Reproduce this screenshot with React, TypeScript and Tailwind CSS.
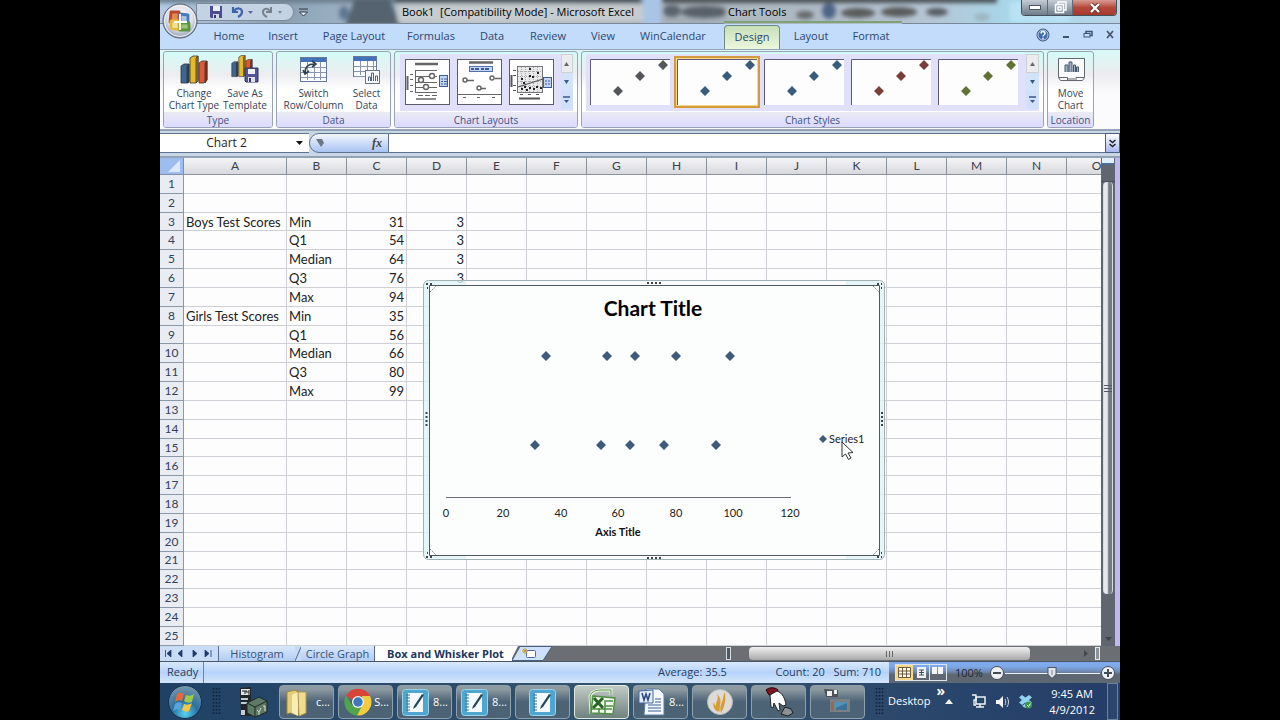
import React from "react";

type Row = { a?: string; b?: string; c?: number; d?: number };

const rows: Row[] = Array.from({ length: 25 }, () => ({}));
["Min", "Q1", "Median", "Q3", "Max", "Min", "Q1", "Median", "Q3", "Max"].forEach((b, i) => {
  rows[i + 2] = { b, c: [31, 54, 64, 76, 94, 35, 56, 66, 80, 99][i], d: i < 4 ? 3 : undefined };
});
rows[2].a = "Boys Test Scores";
rows[7].a = "Girls Test Scores";

const columns = "ABCDEFGHIJKLMNO".split("");

const diamond = (x: number, y: number, r: number) =>
  `M${x} ${y - r}L${x + r} ${y}L${x} ${y + r}L${x - r} ${y}Z`;

/* ---------- title bar ---------- */

function OfficeButton() {
  return (
    <button aria-label="Office Button" className="absolute top-0 left-0.5 z-10">
      <svg width="38" height="40" viewBox="0 0 38 40">
        <defs>
          <radialGradient id="orb" cx="50%" cy="40%" r="60%">
            <stop offset="0" stopColor="#ffffff" />
            <stop offset="0.6" stopColor="#dfe3ec" />
            <stop offset="1" stopColor="#8b94a6" />
          </radialGradient>
        </defs>
        <circle cx="18" cy="21" r="17" fill="url(#orb)" stroke="#56606f" />
        <circle cx="18" cy="21" r="15.5" fill="none" stroke="#f4f6fa" />
        <g strokeWidth="2.8" strokeLinejoin="round">
          <path d="M9 12h8v10H8z" stroke="#b9482a" fill="#e88a4c" />
          <path d="M18 14l8 1v8h-8z" stroke="#4678bc" fill="#a9c4e6" />
          <path d="M9 21h8v9l-8-2z" stroke="#e5b93a" fill="#f6df92" />
          <path d="M18 23h9v7h-9z" stroke="#5a9440" fill="#9cc87c" />
        </g>
        <path d="M18 14v16M12 22h13" stroke="#fff" strokeWidth="1.8" />
      </svg>
    </button>
  );
}

function TitleBar() {
  return (
    <header className="relative flex h-6 shrink-0 items-center bg-[#a9b9c6] text-[11px] text-black">
      <svg className="absolute inset-0 h-full w-full" viewBox="0 0 960 24" preserveAspectRatio="none" aria-hidden="true">
        <defs>
          <filter id="glass"><feGaussianBlur stdDeviation="2.2" /></filter>
          <linearGradient id="barBase" x1="0" x2="1" y1="0" y2="0">
            <stop offset="0" stopColor="#b4cbe3" />
            <stop offset="0.13" stopColor="#8c9fb0" />
            <stop offset="0.16" stopColor="#93aabd" />
            <stop offset="0.3" stopColor="#b7c1c9" />
            <stop offset="0.55" stopColor="#a4adb4" />
            <stop offset="0.8" stopColor="#b5c5d4" />
            <stop offset="0.9" stopColor="#a5d9ec" />
            <stop offset="1" stopColor="#b9d3e6" />
          </linearGradient>
        </defs>
        <rect width="960" height="24" fill="url(#barBase)" />
        <g filter="url(#glass)">
          <rect x="-5" y="-4" width="500" height="7" fill="#6c7f90" />
          <path d="M195 -2h35l10 28h-55z" fill="#55646f" />
          <ellipse cx="112" cy="12" rx="26" ry="8" fill="#8ba0b2" />
          <ellipse cx="184" cy="13" rx="5" ry="7" fill="#5d7690" />
          <rect x="238" y="5" width="245" height="17" fill="#c6cccf" />
          <rect x="235" y="-4" width="245" height="7" fill="#4a5359" />
          <rect x="483" y="-4" width="18" height="32" fill="#a8c5e6" />
          <rect x="502" y="-4" width="335" height="7" fill="#4b5357" />
          <ellipse cx="512" cy="11" rx="9" ry="6" fill="#5a646e" />
          <ellipse cx="545" cy="12" rx="24" ry="6" fill="#59616a" />
          <rect x="566" y="7" width="66" height="13" fill="#aeb9c1" />
          <ellipse cx="645" cy="15" rx="9" ry="4" fill="#66696c" />
          <ellipse cx="669" cy="11" rx="7" ry="8" fill="#4f6486" />
          <ellipse cx="698" cy="13" rx="17" ry="5" fill="#5a5b5c" />
          <ellipse cx="739" cy="12" rx="18" ry="5" fill="#5a5b5c" />
          <ellipse cx="777" cy="12" rx="11" ry="4" fill="#545a60" />
          <ellipse cx="822" cy="17" rx="8" ry="4" fill="#9db5bf" />
          <rect x="850" y="2" width="60" height="20" fill="#b9e3f4" />
        </g>
        <path d="M564 22h178" stroke="#7fa274" strokeWidth="2" />
        <path d="M0 23.5h564M742 23.5h218" stroke="#77889a" strokeWidth="1" />
      </svg>
      <OfficeButton />
      <div className="relative ml-9 flex h-[18px] w-[98px] items-center gap-2 rounded-r-full border border-[#7d8b9b] bg-[#c4d3e4] pl-3">
        <button aria-label="Save">
          <svg width="14" height="14" viewBox="0 0 14 14">
            <path d="M1 1h12v12H2l-1-1z" fill="#4a4c94" />
            <path d="M4 1h7v5H4z" fill="#e9edf8" />
            <path d="M4 9h6v4H4z" fill="#d5d8ec" />
            <path d="M5 10h2v3H5z" fill="#34366f" />
          </svg>
        </button>
        <button aria-label="Undo">
          <svg width="22" height="14" viewBox="0 0 22 14">
            <path d="M2 2v5h5M3 6c3-4 8-3 8 1 0 2-2 4-4 5" fill="none" stroke="#3f62ad" strokeWidth="2.200" />
            <path d="M17 6h5l-2.500 3z" fill="#5b6c83" />
          </svg>
        </button>
        <button aria-label="Redo">
          <svg width="22" height="14" viewBox="0 0 22 14">
            <path d="M10 2v5H5M9 6C6 2 2 4 2 7c0 2 2 4 4 5" fill="none" stroke="#76818e" strokeWidth="2" />
            <path d="M17 6h4l-2 3z" fill="#7a8798" />
          </svg>
        </button>
      </div>
      <button aria-label="Customize toolbar" className="relative ml-1">
        <svg width="11" height="9" viewBox="0 0 11 9">
          <path d="M1 1h9" stroke="#2c3845" /><path d="M1.500 4h8L5.500 8z" fill="#e8eef4" stroke="#2c3845" />
        </svg>
      </button>
      <h1 className="relative ml-[92px] w-[234px] text-center font-medium whitespace-nowrap">
        Book1&nbsp; [Compatibility Mode] - Microsoft Excel
      </h1>
      <span className="relative ml-[93px] font-medium whitespace-nowrap">Chart Tools</span>
      <div className="relative mr-[3px] ml-auto flex h-4 self-start overflow-hidden rounded-b border border-t-0 border-[#454f5c]">
        <button aria-label="Minimize" className="flex w-[26px] items-center justify-center border-r border-[#5f6b78] bg-linear-to-b from-[#c5ccd5] to-[#6f7c8b]">
          <svg width="12" height="5"><rect x=".5" y=".5" width="11" height="4" fill="#fff" stroke="#4c5660" /></svg>
        </button>
        <button aria-label="Restore" className="flex w-[25px] items-center justify-center border-r border-[#5f6b78] bg-linear-to-b from-[#c5ccd5] to-[#6f7c8b]">
          <svg width="13" height="13" fill="none" stroke="#fff" strokeWidth="1.500">
            <path d="M4 3V1h8v8h-2" /><rect x="1.500" y="3.500" width="8" height="8" /><rect x="4" y="6" width="3" height="3" stroke="#fff" />
          </svg>
        </button>
        <button aria-label="Close" className="flex w-[43px] items-center justify-center bg-linear-to-b from-[#d79c94] via-[#b5483c] to-[#a53a2c]">
          <svg width="12" height="10"><path d="M2 1l8 8M10 1L2 9" stroke="#59322e" strokeWidth="4" /><path d="M2 1l8 8M10 1L2 9" stroke="#fff" strokeWidth="2.400" /></svg>
        </button>
      </div>
    </header>
  );
}

/* ---------- ribbon ---------- */

const tabs: [string, string][] = [
  ["Home", "w-12"],
  ["Insert", "w-[60px]"],
  ["Page Layout", "w-[82px]"],
  ["Formulas", "w-[72px]"],
  ["Data", "w-[50px]"],
  ["Review", "w-[62px]"],
  ["View", "w-12"],
  ["WinCalendar", "w-[92px]"],
  ["Design", "w-[56px] mx-[5px]"],
  ["Layout", "w-[52px]"],
  ["Format", "w-[68px]"],
];

function TabRow() {
  return (
    <nav className="flex h-[25px] shrink-0 items-end bg-[#c3dcfb] pl-[45px] text-[11px] leading-[22px] text-[#2d4672]" aria-label="Ribbon tabs">
      {tabs.map(([name, w]) => (
        <button
          key={name}
          className={
            w +
            " h-6 pb-0.5 text-center whitespace-nowrap " +
            (name === "Design"
              ? "rounded-t border border-b-0 border-[#6f8b86] bg-linear-to-b from-[#c7dfb8] to-[#ecf8dc]"
              : "")
          }
        >
          {name}
        </button>
      ))}
      <div className="mr-[5px] ml-auto flex h-full items-center gap-3 pb-1">
        <button aria-label="Help">
          <svg width="14" height="14" viewBox="0 0 14 14">
            <circle cx="7" cy="7" r="6" fill="#3d6cb0" stroke="#3a4d6c" />
            <circle cx="7" cy="7" r="5" fill="none" stroke="#dbe8fa" strokeWidth=".8" />
            <path d="M5 5.500c0-3 4-2.500 4 0C9 7 7 7 7 8.500M7 9.800v1.400" fill="none" stroke="#fff" strokeWidth="1.400" />
          </svg>
        </button>
        <button aria-label="Minimize workbook"><svg width="9" height="9"><path d="M1 7h6" stroke="#3d5374" strokeWidth="2" /></svg></button>
        <button aria-label="Restore workbook">
          <svg width="10" height="9" fill="none" stroke="#3d5374"><path d="M3 3V1.500h6v4H7" strokeWidth="1.500" /><rect x="1" y="3.500" width="6" height="3.500" /></svg>
        </button>
        <button aria-label="Close workbook"><svg width="10" height="9"><path d="M2 1l6 7M8 1L2 8" stroke="#4a5568" strokeWidth="1.800" /></svg></button>
      </div>
    </nav>
  );
}

function Group({ title, className, children }: { title: string; className: string; children: React.ReactNode }) {
  return (
    <section
      className={
        "flex shrink-0 flex-col overflow-hidden rounded-[3px] border border-[#9aa2b8] bg-linear-to-b from-[#d2fbf6] from-0% via-[#ededf0] via-30% to-white to-50% " +
        className
      }
    >
      <div className="flex min-h-0 flex-1 justify-center">{children}</div>
      <h2 className="h-[15px] bg-linear-to-b from-[#ebebf3] to-[#dcdaff] text-center text-[10px] leading-4 whitespace-nowrap text-[#3f4f86]">
        {title}
      </h2>
    </section>
  );
}

function BigButton({ lines, className, children }: { lines: [string, string]; className: string; children: React.ReactNode }) {
  return (
    <button className={"flex flex-col items-center text-[10px] leading-3 whitespace-nowrap text-[#34425c] " + className}>
      <span className="flex h-[35px] items-center">{children}</span>
      <span>{lines[0]}</span>
      <span>{lines[1]}</span>
    </button>
  );
}

function Bars({ x = 0, s = 1 }: { x?: number; s?: number }) {
  return (
    <g transform={`translate(${x} 0) scale(${s})`} stroke="#3b3430" strokeWidth=".8" strokeLinejoin="round">
      <path d="M1 12l3-2h5v18l-2 1H1z" fill="#3b6793" />
      <path d="M7 12l2-2v18l-2 1z" fill="#234563" />
      <path d="M10 4l3-2h5v25l-2 2h-6z" fill="#e6bb2b" />
      <path d="M16 4l2-2v25l-2 2z" fill="#a9811a" />
      <path d="M19 9l3-2h5v19l-3 3h-5z" fill="#dd5a32" />
      <path d="M25 9l2-2v19l-2 3z" fill="#98301d" />
    </g>
  );
}

function SheetGrid({ w, h }: { w: number; h: number }) {
  return (
    <g>
      <rect x=".5" y="1.500" width={w} height={h} fill="#fcfdff" stroke="#68779c" />
      <rect x="1" y="2" width={w - 1} height="4" fill="#4272b8" />
      <path
        d={`M1 11.500H${w}M1 16.500H${w}M1 21.500H${w}M7.500 6V${h}M14.500 6V${h}M20.500 6V${h}`}
        stroke="#8a93b0"
      />
    </g>
  );
}

function LayoutThumb({ kind }: { kind: number }) {
  return (
    <svg width="45" height="46" viewBox="0 0 45 46">
      <rect x=".5" y=".5" width="44" height="45" fill="#fff" stroke="#5c5c66" />
      {kind === 0 && (
        <g fill="none" stroke="#666" strokeWidth="1">
          <path d="M10 5h23" strokeWidth="2.500" />
          <path d="M10.500 11v23M10 11.500h22M10 17.500h22M10 23.500h22M10 28.500h22M10 33.500h22" />
          <path d="M2.500 17v14" strokeWidth="2" />
          <path d="M5 15.500h3M5 20.500h3M5 26.500h3M5 32.500h3M13 36.500h5M20 36.500h5M27 36.500h5" />
          <path d="M11 40h20" strokeWidth="1.500" />
          <g fill="#fff" strokeWidth="1.500"><circle cx="16" cy="21" r="2.500" /><circle cx="27" cy="17" r="2.500" /><circle cx="21" cy="28" r="2.500" /></g>
          <rect x="34.500" y="16.500" width="8" height="11" fill="#c4d6f3" stroke="#3c5d9c" />
          <path d="M36 20h2M39 20h3M36 22.500h2M39 22.500h3M36 25h2M39 25h3" stroke="#3c5d9c" />
        </g>
      )}
      {kind === 1 && (
        <g fill="none" stroke="#666">
          <path d="M12 3.500h24" strokeWidth="2.500" />
          <rect x="12.500" y="7.500" width="23" height="5" fill="#c4d6f3" stroke="#5371a8" />
          <path d="M14 10h3M18 10h4M24 10h3M28 10h4" stroke="#3c5d9c" strokeWidth="2" />
          <path d="M10 21.500h7M24 29.500h5M38 19.500h6" strokeWidth="1.500" />
          <g fill="#fff" strokeWidth="1.500"><circle cx="8" cy="21" r="2" /><circle cx="22" cy="29" r="2" /><circle cx="35" cy="19" r="2" /></g>
          <path d="M1 35.500h43M6 38.500h3M20 38.500h3M35 38.500h3" />
        </g>
      )}
      {kind === 2 && (
        <g fill="none" stroke="#555">
          <rect x="8.500" y="7.500" width="25" height="26" fill="#e9e9ec" stroke="#777" />
          <path d="M12.500 8v25M16.500 8v25M20.500 8v25M24.500 8v25M28.500 8v25M9 12.500h24M9 17.500h24M9 22.500h24M9 27.500h24" stroke="#aaa" strokeDasharray="1 1" />
          <path d="M9 28l25-8" strokeWidth="1.300" />
          <path d="M2.500 16v12" strokeWidth="2" />
          <path d="M4 11.500h3M4 16.500h3M4 26.500h3M4 31.500h3M11 35.500h3M19 35.500h3M27 35.500h3" />
          <path d="M10 39.500h21" strokeWidth="2" />
          <rect x="34.500" y="18.500" width="8" height="10" fill="#c4d6f3" stroke="#3c5d9c" />
          <path d="M36 22h2M39 22h2M36 25h2M39 25h2" stroke="#3c5d9c" />
          <path d="M20 10h2M20 17h2M23 18h2M28 14h2M12 20h2M12 30h2M15 28h2M17 31h2M20 29h2M24 30h2M27 28h2M31 29h2M14 24h2" stroke="#222" strokeWidth="1.800" />
        </g>
      )}
    </svg>
  );
}

function GallerySpinner() {
  return (
    <div className="ml-auto flex w-[13px] flex-col">
      <button aria-label="Scroll up" className="flex h-[19px] items-center justify-center border border-[#cfcfd6] bg-[#ececee]">
        <svg width="5" height="4"><path d="M0 4l2.500-4L5 4z" fill="#666" /></svg>
      </button>
      <button aria-label="Scroll down" className="flex h-[18px] items-center justify-center bg-[#d3e3f9]">
        <svg width="5" height="4"><path d="M0 0h5L2.500 4z" fill="#385a88" /></svg>
      </button>
      <button aria-label="More" className="flex h-[18px] items-center justify-center bg-[#cfe0f8]">
        <svg width="7" height="8"><path d="M0 1h7" stroke="#385a88" strokeWidth="1.500" /><path d="M1 4h5L3.500 7z" fill="#385a88" /></svg>
      </button>
    </div>
  );
}

const styleColors = ["#55565a", "#3a5c7c", "#3a5c7c", "#793f3a", "#627235"];

function Ribbon() {
  return (
    <div className="flex h-[82px] shrink-0 gap-[3px] overflow-hidden border-t border-b-2 border-[#93a2b4] bg-linear-to-b from-[#d8faf6] from-0% via-[#ececef] via-30% to-[#fbfbfd] to-55% px-[3px] pt-px pb-px">
      <Group title="Type" className="w-[110px]">
        <BigButton lines={["Change", "Chart Type"]} className="w-[54px]"><svg width="29" height="31"><Bars /></svg></BigButton>
        <BigButton lines={["Save As", "Template"]} className="w-[48px]">
          <svg width="29" height="31">
            <Bars s={0.78} />
            <path d="M14 14h13v14H15l-1-1z" fill="#555494" stroke="#34345f" />
            <path d="M17 15h7v5h-7z" fill="#edf0f9" /><path d="M17 23h7v5h-7z" fill="#dcdff0" /><path d="M18 24h2v4h-2z" fill="#34345f" />
          </svg>
        </BigButton>
      </Group>
      <Group title="Data" className="w-[115px]">
        <BigButton lines={["Switch", "Row/Column"]} className="w-[66px]">
          <svg width="28" height="28">
            <SheetGrid w={26} h={24} />
            <path d="M5 17c0-6 3-9 9-9M3 14l2 4 4-3M12 5l4 3-4 3" fill="none" stroke="#2c3f55" strokeWidth="1.600" />
          </svg>
        </BigButton>
        <BigButton lines={["Select", "Data"]} className="w-[40px]">
          <svg width="28" height="30">
            <SheetGrid w={23} h={20} />
            <rect x="12.500" y="15.500" width="14" height="13" fill="#f7f8fb" stroke="#6b7587" />
            <path d="M15.500 26v-4h2v4M18.500 26v-8h2v8M22.500 26v-5h2v5" fill="none" stroke="#4e6486" />
          </svg>
        </BigButton>
      </Group>
      <Group title="Chart Layouts" className="w-[184px]">
        <div className="mt-0.5 flex h-[57px] w-[173px] items-start gap-[7px] bg-[#e1e0fb] pl-[5px]">
          {[0, 1, 2].map((k) => (
            <button key={k} aria-label={"Layout " + (k + 1)} className="mt-[5px]"><LayoutThumb kind={k} /></button>
          ))}
          <GallerySpinner />
        </div>
      </Group>
      <Group title="Chart Styles" className="w-[463px]">
        <div className="mt-0.5 flex h-[57px] w-[453px] items-start gap-px bg-[#e1e0fb] pl-px">
          {styleColors.map((c, i) => (
            <button
              key={i}
              aria-label={"Style " + (i + 1)}
              className={"mt-0.5 h-[52px] w-[86px] shrink-0 " + (i === 1 ? "border-2 border-[#d39a3e] bg-[#f7d88e] p-px" : "p-[3px]")}
            >
              <svg width="80" height="46" viewBox="0 0 80 46" className="block">
                <rect width="80" height="46" fill="#fdfdfe" />
                <path d="M.5 46V.5H80" fill="none" stroke="#5f5a7a" />
                <path d={diamond(28, 32, 5) + diamond(50, 17, 5) + diamond(73, 6, 5)} fill={c} />
              </svg>
            </button>
          ))}
          <GallerySpinner />
        </div>
      </Group>
      <Group title="Location" className="w-[47px]">
        <BigButton lines={["Move", "Chart"]} className="w-[40px]">
          <svg width="28" height="26">
            <path d="M1.500 1.500h26v19l-2 3h-22l-2-3z" fill="#fafafc" stroke="#62676f" />
            <path d="M1.500 20.500h9v3M19 23v-2.500h8M10 22h8" fill="none" stroke="#62676f" />
            <path d="M8 15V8h3v7M12 15V5h3v10M16.500 15V8h2v7M19.500 15v-5h2v5" fill="#9fb0c8" stroke="#46566c" />
          </svg>
        </BigButton>
      </Group>
    </div>
  );
}

function FormulaBar() {
  return (
    <div className="flex h-[27px] shrink-0 items-stretch border-b-2 border-[#93a2b4] bg-[#c9d6e6] pt-[2px] pb-[3px]">
      <label className="flex w-[149px] items-center border-y border-[#5e7393] bg-white">
        <input aria-label="Name box" defaultValue="Chart 2" className="w-[133px] bg-transparent text-center text-xs text-[#222]" />
        <svg width="8" height="5" className="ml-0.5"><path d="M1 0h7L4.500 4z" fill="#111" /></svg>
      </label>
      <div className="flex w-20 items-center justify-between rounded-l-full border border-[#5e7393] bg-linear-to-b from-[#f3f6fd] to-[#a9c3f2] pr-1.5 pl-1.5">
        <svg width="8" height="8"><path d="M0 0h6l2 4-3 4z" fill="#6d7686" /></svg>
        <button className="font-[Liberation_Serif,serif] text-xs leading-none font-bold text-[#444] italic">fx</button>
      </div>
      <input aria-label="Formula" className="min-w-0 flex-1 border-y border-[#5e7393] bg-white" />
      <button aria-label="Expand formula bar" className="flex w-[15px] items-center justify-center border border-[#4a5f82] bg-linear-to-b from-white to-[#a9b9ee]">
        <svg width="7" height="9" fill="none" stroke="#222" strokeWidth="1.500"><path d="M.5 1l3 2.500 3-2.500M.5 5l3 2.500 3-2.500" /></svg>
      </button>
    </div>
  );
}

/* ---------- worksheet ---------- */

const seriesTop = [35, 56, 66, 80, 99];
const seriesBottom = [31, 54, 64, 76, 94];
const px = (v: number) => Math.round(22 + v * 2.87);

function Chart() {
  return (
    <svg
      className="absolute top-[122px] left-[263px] font-[Lato,sans-serif]"
      width="462"
      height="280"
      viewBox="0 0 462 280"
      role="img"
      aria-label="Scatter chart"
    >
      <rect x=".5" y=".5" width="461" height="279" rx="5" fill="#e0f3f5" fillOpacity=".8" stroke="#9fb2b6" />
      <path d="M43 1h380v5H43zM43 274h380v5H43z" fill="#fbfcfc" />
      <path d="M6.500 5.500h450v270H6.500z" fill="#fcfdfd" stroke="#4e5a5e" />
      <path d="M7 12l6-6M450 6l6 6M7 269l6 6M456 269l-6 6" stroke="#77858a" strokeDasharray="1.500 1" />
      <g stroke="#3c464a" strokeWidth="2" strokeDasharray="2 2">
        <path d="M224 3h15M224 278h15M3.500 132v15M459 132v15M3 4h6M4 8h1M454 4h5M458 8h1M3 277h6M4 273h1M454 277h5M458 273h1" />
      </g>
      <text x="230" y="36" textAnchor="middle" fontSize="21" fontWeight="700">Chart Title</text>
      <path
        fill="#405a7b"
        d={
          seriesTop.map((v) => diamond(px(v) + 1, 76, 5)).join("") +
          seriesBottom.map((v) => diamond(px(v) + 1, 165, 5)).join("") +
          diamond(400, 159, 4)
        }
      />
      <path d="M23 217.500h345" stroke="#6b6f7a" />
      <g fontSize="11" textAnchor="middle" fill="#222">
        {[0, 20, 40, 60, 80, 100, 120].map((v) => (
          <text key={v} x={px(v) + 1} y="237">{v}</text>
        ))}
      </g>
      <text x="195" y="256" textAnchor="middle" fontSize="11" fontWeight="700" fill="#111">Axis Title</text>
      <text x="406" y="163" fontSize="11" fill="#222">Series1</text>
      <path d="M419 162v15l3.500-3 3 5.500 2.500-1.500-3-5 5-.5z" fill="#fff" stroke="#333" strokeLinejoin="round" />
    </svg>
  );
}

function Worksheet() {
  return (
    <div className="flex min-h-0 flex-1">
      <div className="relative min-w-0 flex-1 overflow-hidden bg-[#fdfdfe]">
        <table className="h-full w-[967px] table-fixed border-separate border-spacing-0 font-[Lato,sans-serif] text-[13px] leading-4 text-[#222]">
          <colgroup>
            <col className="w-6" />
            <col className="w-[103px]" />
            {columns.slice(1).map((c) => (
              <col key={c} className="w-[60px]" />
            ))}
          </colgroup>
          <thead>
            <tr>
              <th className="border-r border-b border-[#7f8fa6] bg-[#9dbcf0] p-0">
                <svg width="24" height="16" className="block"><path d="M20 2v12H8z" fill="#dce8fb" /></svg>
              </th>
              {columns.map((c) => (
                <th key={c} scope="col" className="border-r border-b border-[#8b929e] bg-linear-to-b from-[#f5f5f7] to-[#d8d9de] p-0 text-xs font-normal text-[#3b4048]">
                  {c}
                </th>
              ))}
            </tr>
          </thead>
          <tbody>
            {rows.map((r, i) => (
              <tr key={i}>
                <th scope="row" className="border-r border-b border-[#8b98a8] bg-[#e9edf3] p-0 text-xs font-normal text-[#33415a]">{i + 1}</th>
                {columns.map((c, j) => (
                  <td
                    key={c}
                    className={
                      "border-r border-b border-[#cfd0d6] py-0 pr-0.5 pl-0.5 whitespace-nowrap " + (j > 1 ? "text-right" : "text-left")
                    }
                  >
                    {j === 0 ? r.a : j === 1 ? r.b : j === 2 ? r.c : j === 3 ? r.d : null}
                  </td>
                ))}
              </tr>
            ))}
          </tbody>
        </table>
        <Chart />
      </div>
      <div className="flex w-[14px] flex-col bg-[#5f6670]">
        <div className="mx-px h-[7px] border-b-2 border-[#4c6d9a] bg-[#e3eefb]" />
        <div className="h-[17px] border-b border-[#4b525c]" />
        <div className="mx-0.5 flex h-[412px] items-center justify-center rounded-sm border-x border-[#d7dade] bg-linear-to-r from-[#e8e9ec] from-40% to-[#777b84] to-60%">
          <svg width="8" height="8" stroke="#555b66"><path d="M0 1.500h8M0 4.500h8M0 7.500h8" /></svg>
        </div>
        <div className="flex flex-1 items-end justify-center pb-1">
          <svg width="7" height="5"><path d="M0 0h7L3.500 4z" fill="#3f444c" /></svg>
        </div>
      </div>
      <div className="w-[5px] bg-[#bfb8f0]" />
    </div>
  );
}

function SheetTabs() {
  return (
    <div className="flex h-4 shrink-0 items-stretch border-b border-[#4b5666] bg-[#6b6e72] text-[11px] leading-4">
      <div className="flex w-[59px] items-center justify-between border-r border-[#5b6f90] bg-[#c8dcf8] pr-1.5 pl-1">
        {["M1.500 0v7M7 0v7L3 3.500z", "M5 0v7L1 3.500z", "M2 0v7l4-3.500z", "M7 0v7M1 0v7l4-3.500z"].map((d, i) => (
          <button key={i} aria-label={["First sheet", "Previous sheet", "Next sheet", "Last sheet"][i]}>
            <svg width="8" height="7" className="block"><path d={d} fill="#1f3a68" stroke="#1f3a68" strokeWidth=".8" /></svg>
          </button>
        ))}
      </div>
      <button className="w-[76px] bg-linear-to-b from-[#dbe8fb] to-[#b2cdf2] text-center text-[#33517d]">Histogram</button>
      <svg width="6" height="15" className="block bg-[#c6daf6]"><path d="M0 15L6 1" stroke="#55698b" /></svg>
      <button className="w-[74px] border-r border-[#55698b] bg-linear-to-b from-[#dbe8fb] to-[#b2cdf2] text-center whitespace-nowrap text-[#33517d]">Circle Graph</button>
      <button className="w-[137px] bg-white pl-1 text-center font-bold whitespace-nowrap text-[#20365e]">Box and Whisker Plot</button>
      <button aria-label="Insert worksheet">
        <svg width="42" height="15" className="block">
          <path d="M0 0h6L0 12z" fill="#fff" />
          <path d="M8 .5h32l-9 14H0z" fill="#cfe1fa" stroke="#4b5f83" />
          <rect x="14.500" y="4.500" width="9" height="7" rx="1" fill="#fff" stroke="#5468a0" />
          <path d="M10 5h6M13 2v6M11 3l4 4M15 3l-4 4" stroke="#c99a31" />
        </svg>
      </button>
      <div className="flex flex-1 items-stretch py-px">
        <div className="ml-[172px] w-[5px] border border-[#d8dbe0] bg-[#4d5868]" />
        <div className="ml-[18px] flex w-[281px] items-center justify-center rounded-sm bg-linear-to-b from-[#f1f1f1] to-[#a9a9ab]">
          <svg width="9" height="6" stroke="#666"><path d="M1.500 0v6M4.500 0v6M7.500 0v6" /></svg>
        </div>
        <svg width="6" height="8" className="mr-1.5 ml-auto self-center"><path d="M1 0v7l4-3.500z" fill="#44484e" /></svg>
        <div className="mr-5 w-[5px] border border-[#e8eaee] bg-[#8b939d]" />
      </div>
    </div>
  );
}

function StatusBar() {
  return (
    <div className="flex h-[21px] shrink-0 items-stretch bg-linear-to-b from-[#d9e9fd] via-[#b5d3fa] via-50% to-[#d5e6fb] text-[11px] leading-5 text-[#27395c]">
      <span className="w-11 border-r border-[#6d84aa] pl-[7px]">Ready</span>
      <div className="ml-auto flex w-[231px] justify-between whitespace-nowrap">
        <span>Average: 35.5</span>
        <span className="ml-10">Count: 20</span>
        <span className="pr-2">Sum: 710</span>
      </div>
      <div className="flex w-[231px] items-center bg-linear-to-b from-[#7fa9ea] from-20% via-[#6f8bb3] via-45% to-[#5f6872] to-60% pl-1.5">
        <div className="flex h-[17px] border border-[#dbe3ee]">
          <button aria-label="Normal view" className="flex w-[17px] items-center justify-center bg-[#f6d98d]">
            <svg width="13" height="11" fill="#fff" stroke="#6b5a35"><path d="M.5.500h12v10H.5zM.5 4h12M.5 7h12M4.500.5v10M8.500.5v10" /></svg>
          </button>
          <button aria-label="Page layout view" className="flex w-[17px] items-center justify-center border-r border-[#dbe3ee]">
            <svg width="9" height="11"><rect width="9" height="11" fill="#eef1f5" /><path d="M2 3h5M2 5.500h5M2 8h5M4.500 3v5" stroke="#444c58" /></svg>
          </button>
          <button aria-label="Page break view" className="flex w-[16px] items-center justify-center">
            <svg width="12" height="11"><path d="M0 0h5v7H0zM6 0h5v7H6z" fill="#f2f4f7" /></svg>
          </button>
        </div>
        <span className="ml-2 w-8 text-[#1c2531]">100%</span>
        <button aria-label="Zoom out" className="ml-0.5">
          <svg width="16" height="16"><circle cx="8" cy="8" r="6.500" fill="#f0f1f4" stroke="#454d5a" /><path d="M4 8h8" stroke="#444c58" strokeWidth="2" /></svg>
        </button>
        <svg width="94" height="16" className="min-w-0 flex-1" viewBox="0 0 94 16" preserveAspectRatio="none">
          <path d="M0 8.500h94" stroke="#eef2f7" />
          <path d="M42.500 2.500h8v7l-4 4-4-4z" fill="#e2e5ea" stroke="#4c5664" /><path d="M46.500 5v5" stroke="#7b8592" />
        </svg>
        <button aria-label="Zoom in" className="mr-1">
          <svg width="16" height="16"><circle cx="8" cy="8" r="6.500" fill="#f0f1f4" stroke="#454d5a" /><path d="M4 8h8M8 4v8" stroke="#444c58" strokeWidth="2" /></svg>
        </button>
      </div>
    </div>
  );
}

/* ---------- taskbar ---------- */

function Grip() {
  return (
    <svg width="9" height="30" className="shrink-0">
      <path d="M1.500 1v28M4.500 1v28M7.500 1v28" stroke="#10203a" strokeWidth="1.500" strokeDasharray="1.500 2" />
    </svg>
  );
}

function Notebook() {
  return (
    <svg width="27" height="27" viewBox="0 0 27 27">
      <rect x=".5" y=".5" width="26" height="26" rx="3" fill="#4fa6cf" stroke="#9ad4ec" />
      <path d="M6 4h15v19H6z" fill="#f4fafc" />
      <path d="M4 6h4M4 9h4M4 12h4M4 15h4M4 18h4M4 21h4" stroke="#3a708e" />
      <path d="M20 5l-8 12-1 3 3-2 8-12z" fill="#27485c" />
    </svg>
  );
}

const apps: { name: string; text?: string; active?: boolean; icon: React.ReactNode }[] = [
  {
    name: "Folder",
    text: "c...",
    icon: (
      <svg width="27" height="29" viewBox="0 0 27 29">
        <path d="M3 4l8-2 3 2v23l-8-2-3 1z" fill="#e5cd78" stroke="#9d8542" />
        <path d="M8 7l6-3v24l-6-3z" fill="#f9edb6" />
        <path d="M14 4h8v21l-7 3z" fill="#efdc8e" stroke="#b39a52" />
      </svg>
    ),
  },
  {
    name: "Chrome",
    text: "S...",
    icon: (
      <svg width="30" height="28" viewBox="0 0 30 28">
        <path d="M15 14L3 8A13.500 13.500 0 0 1 27 8H15z" fill="#d94436" />
        <path d="M3 7.500A13.500 13.500 0 0 0 14 27.500L20 17 9 17z" fill="#4fa44d" />
        <path d="M27 8A13.500 13.500 0 0 1 14 27.500L20 16 19 8z" fill="#f2cc3e" />
        <circle cx="15" cy="14" r="6" fill="#f3f5f7" />
        <circle cx="15" cy="14" r="4.700" fill="#3d79ba" />
      </svg>
    ),
  },
  { name: "Notebook 1", text: "8...", icon: <Notebook /> },
  { name: "Notebook 2", text: "8...", icon: <Notebook /> },
  { name: "Notebook 3", icon: <Notebook /> },
  {
    name: "Excel",
    active: true,
    icon: (
      <svg width="30" height="28" viewBox="0 0 30 28">
        <path d="M4 26L3 8c2-5 6-6 12-6h9v5" fill="none" stroke="#e7f2e2" strokeWidth="3" />
        <path d="M4 26L3 8c2-5 6-6 12-6h9v5" fill="none" stroke="#5d9b4d" />
        <path d="M6 8l22 2-2 16-22-1z" fill="#f2f8ee" stroke="#4f8f42" strokeWidth="1.500" />
        <path d="M19 13h7M18 18h8M5 21h20M12 20v5M18 12v13" stroke="#4f8f42" strokeWidth="1.500" />
        <path d="M7 10l9 10M16 10L6 20" stroke="#296425" strokeWidth="3" />
      </svg>
    ),
  },
  {
    name: "Word",
    text: "8...",
    icon: (
      <svg width="28" height="28" viewBox="0 0 28 28">
        <path d="M8 1h13l5 5v21H6z" fill="#f6f9fd" stroke="#5d7ba7" />
        <path d="M10 17h13M10 20h13M10 23h13M17 11h6M17 14h6" stroke="#7991b9" strokeWidth="1.500" />
        <path d="M1 3l14-1v13H1z" fill="#e4ecf8" stroke="#4767a0" />
        <path d="M4 5l2 7 2-6 2 6 2-7" fill="none" stroke="#2d4a86" strokeWidth="1.600" />
      </svg>
    ),
  },
  {
    name: "Flame",
    icon: (
      <svg width="28" height="28" viewBox="0 0 28 28">
        <circle cx="14" cy="14" r="12.500" fill="#dedbd6" stroke="#b9bcc0" />
        <path d="M13.500 24C9 21 9 17 11 13c1-3 1-4 0-7 4 4 4 7 3 11zM15 25c-2-7 1-10 2-14 0-3 1-5 2-7 0 5 2 10-4 21zM12 24c-5-3-5-7-4-10 1 4 3 6 4 10z" fill="#d69d35" />
      </svg>
    ),
  },
  {
    name: "Pointer tool",
    icon: (
      <svg width="34" height="31" viewBox="0 0 34 31">
        <path d="M4 3c3-3 9-3 12 0l-2 5H7z" fill="#7d1620" stroke="#25090c" />
        <path d="M8 8l7-4c6 2 8 8 9 14l-3 1-4-3 1 7-2 1-4-8-1 5-2-1z" fill="#fff" stroke="#222" />
        <path d="M19 27l4-7 6 2 2 4-5 3z" fill="#8d9294" stroke="#1c1f22" />
      </svg>
    ),
  },
  {
    name: "Screen tool",
    icon: (
      <svg width="32" height="28" viewBox="0 0 32 28">
        <path d="M2 1l14 1v7H4z" fill="#4c5257" /><path d="M5 3h5v5H5zM12 2h3v4h-3z" fill="#eceeed" />
        <path d="M8 11h20v13H8z" fill="#7b8084" /><path d="M13 14h13v8H13z" fill="#4c93bd" />
        <path d="M14 20l11-5v7H14z" fill="#3a7397" /><path d="M9 14h3v9H9z" fill="#8f6b58" />
      </svg>
    ),
  },
];

function Taskbar() {
  return (
    <footer className="flex h-[37px] shrink-0 items-center bg-linear-to-r from-[#1f4165] via-[#35546d] via-50% to-[#243d69] pl-2 text-[11px] text-white">
      <button aria-label="Start">
        <svg width="36" height="36" viewBox="0 0 36 36">
          <defs>
            <radialGradient id="start" cx="50%" cy="85%" r="85%">
              <stop offset="0" stopColor="#59d2ef" /><stop offset=".45" stopColor="#2b6f9f" /><stop offset="1" stopColor="#7c98ab" />
            </radialGradient>
          </defs>
          <circle cx="17" cy="18" r="16.500" fill="url(#start)" stroke="#17304b" />
          <path d="M9 10c3-2 5-1 7 0l-2 7c-2-1-4-1-7 1z" fill="#e5673a" />
          <path d="M18 11c3 1 5 1 8-1l-2 8c-3 1-5 1-8-1z" fill="#9dc94e" />
          <path d="M7 20c2-2 5-2 7-1l-2 7c-2-1-4-1-7 1z" fill="#58a4dc" />
          <path d="M16 20c3 1 5 1 8-1l-3 8c-2 1-4 1-7-1z" fill="#f3c845" />
        </svg>
      </button>
      <div className="ml-2"><Grip /></div>
      <button aria-label="Dice tool" className="ml-4">
        <svg width="32" height="32" viewBox="0 0 32 32">
          <path d="M3 2l11-1v29H4z" fill="#20262a" /><path d="M4 3h9v6H4z" fill="#dfe3e1" />
          <path d="M5 5h3v3M9 4v2h3M12 4v5" fill="none" stroke="#222" />
          <path d="M4 12h7v2H4zM4 16h7v2H4zM4 24h4v5H4z" fill="#c7cccd" />
          <path d="M10 17l12-6 8 4v11l-12 5-8-4z" fill="#5d7a65" stroke="#1d2822" />
          <path d="M10 17l8 4 12-6M18 21v10" fill="none" stroke="#1d2822" />
          <path d="M20 24l2 2 2-4M22 26v3M26 20h2v5" stroke="#d4dfd4" fill="none" />
        </svg>
      </button>
      <div className="ml-[10px] flex h-full gap-1 pt-0.5">
        {apps.map((a) => (
          <button
            key={a.name}
            aria-label={a.name}
            className={
              "flex h-[34px] w-[55px] items-center rounded-sm border " +
              (a.text ? "justify-between pr-[3px] pl-1 " : "justify-center ") +
              (a.active
                ? "border-[#e1e9e5] bg-linear-to-b from-[#c3cac6] to-[#6f837e]"
                : "border-[#8fa1ae] bg-linear-to-b from-[#8d9aa0] from-10% to-[#4c6275] to-50%")
            }
          >
            {a.icon}
            {a.text && <span>{a.text}</span>}
          </button>
        ))}
      </div>
      <div className="ml-2.5"><Grip /></div>
      <span className="ml-1">Desktop</span>
      <button className="ml-1.5 self-start text-sm leading-4 font-bold" aria-label="More desktop items">»</button>
      <div className="ml-auto flex items-center gap-2">
        <button aria-label="Hidden icons"><svg width="8" height="5"><path d="M0 5l4-5 4 5z" fill="#f1f5fa" /></svg></button>
        <svg width="16" height="15" viewBox="0 0 16 15" className="ml-2.5" role="img" aria-label="Network">
          <path d="M5 3h9v7H5zM9 10v3M5 13h8" fill="none" stroke="#eef3f8" strokeWidth="1.500" /><path d="M1 1h4v5H3v5h2" fill="none" stroke="#eef3f8" strokeWidth="1.300" />
        </svg>
        <svg width="15" height="14" viewBox="0 0 15 14" role="img" aria-label="Volume">
          <path d="M1 5h3l4-4v12L4 9H1z" fill="#f4f7fa" /><path d="M10 4c1 2 1 4 0 6M12 2c2 3 2 7 0 10" fill="none" stroke="#c9d5e1" />
        </svg>
        <svg width="15" height="15" viewBox="0 0 15 15" role="img" aria-label="Dropbox">
          <path d="M4 1l3.500 2.500L11 1l3 2.500-3 2.500 3 2.500L11 11 7.500 8.500 4 11 1 8.500 4 6 1 3.500zM4 12l3.500-2.500L11 12l-3.500 2z" fill="#8fd3ee" />
          <circle cx="10.500" cy="11" r="3.500" fill="#3d9a4c" /><path d="M9 11l1.500 1.500 2-3" fill="none" stroke="#fff" />
        </svg>
      </div>
      <time className="ml-2 w-[62px] text-center leading-4">
        9:45 AM
        <br />
        4/9/2012
      </time>
      <button aria-label="Show desktop" className="mr-0.5 ml-1 h-full w-[11px] border border-[#6c83a0] bg-[#2b456c]" />
    </footer>
  );
}

export default function App() {
  return (
    <div className="flex h-screen justify-center overflow-hidden bg-black font-[Open_Sans,Noto_Sans,sans-serif]">
      <main className="flex h-full w-3/4 flex-col overflow-hidden bg-[#c3dcfb]">
        <TitleBar />
        <TabRow />
        <Ribbon />
        <FormulaBar />
        <Worksheet />
        <SheetTabs />
        <StatusBar />
        <Taskbar />
      </main>
    </div>
  );
}
